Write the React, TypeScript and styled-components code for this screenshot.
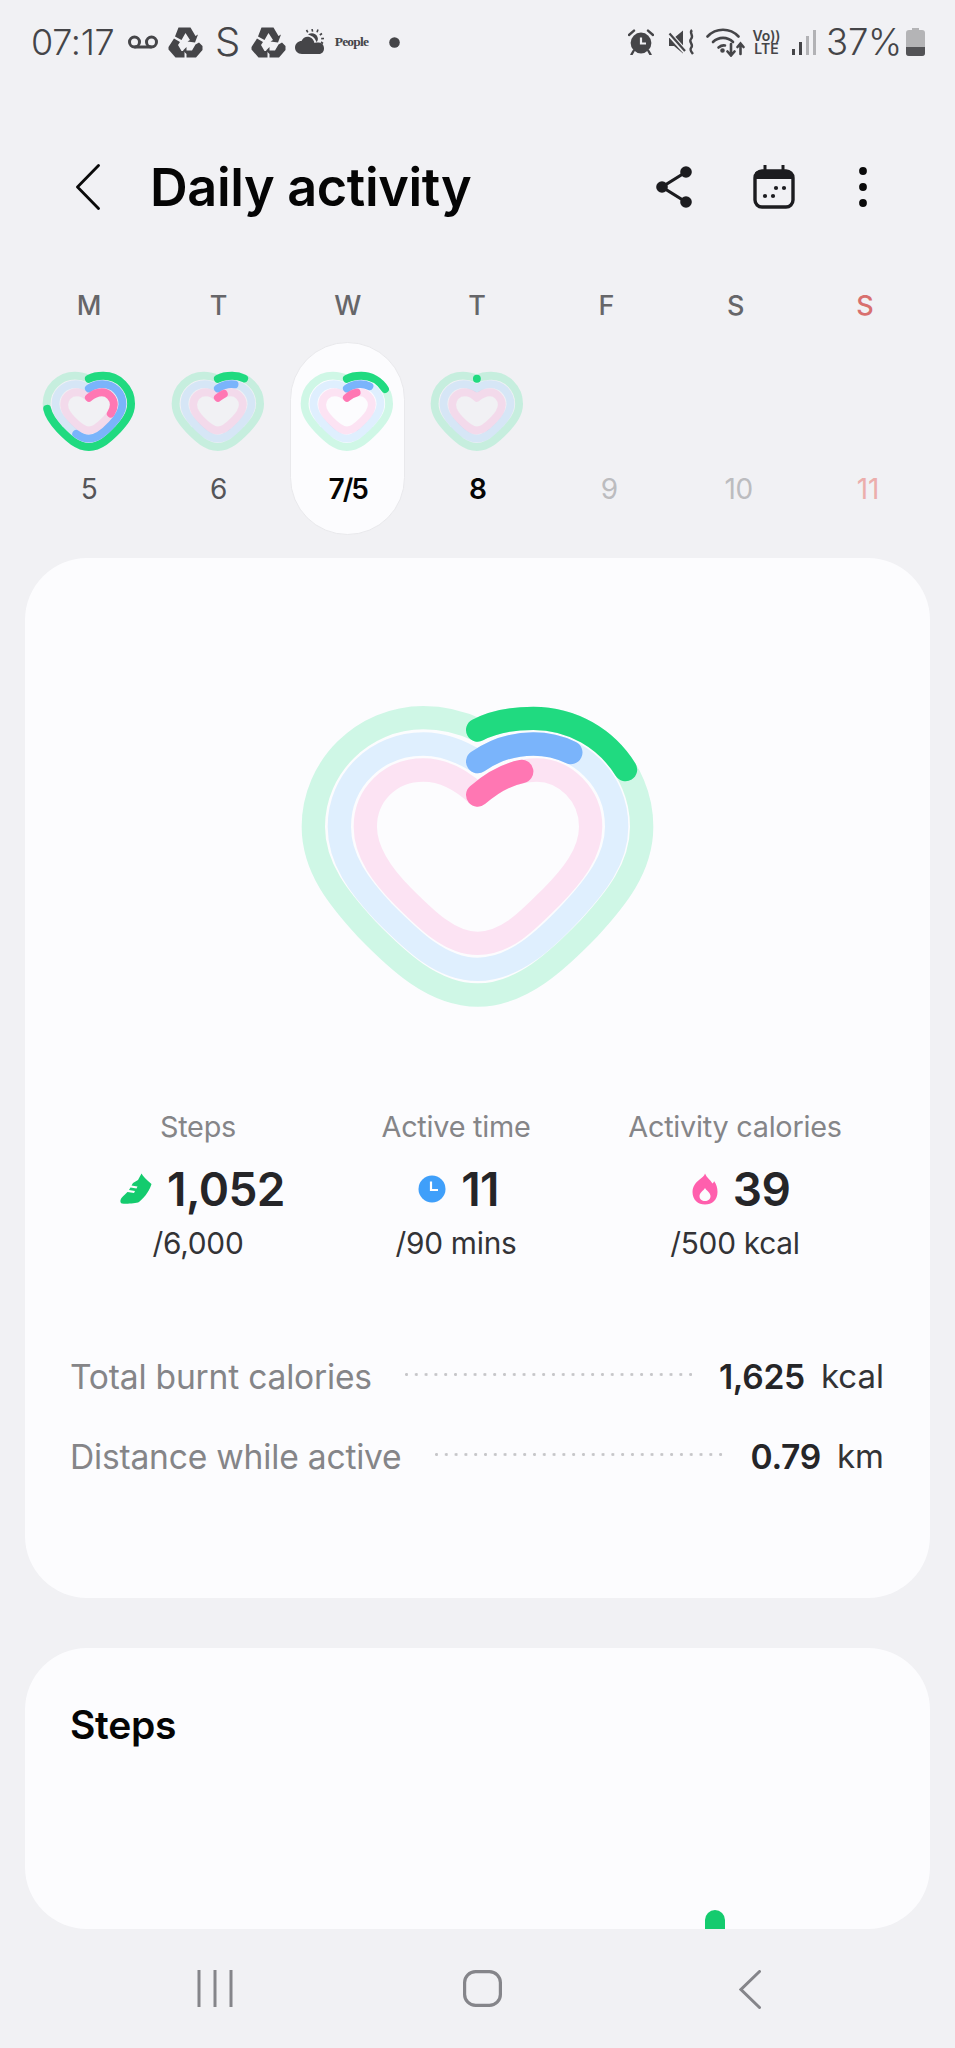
import React from "react";
import styled, { createGlobalStyle } from "styled-components";

const Global = createGlobalStyle`
  html, body { margin: 0; padding: 0; background: #f1f1f4; }
  body { font-family: Inter, "Noto Sans", "Liberation Sans", sans-serif; }
  #root { width: 955px; height: 2048px; overflow: hidden; }
`;

const Page = styled.div`
  width: 955px;
  height: 2048px;
  overflow: hidden;
  background: #f1f1f4;
  display: flex;
  flex-direction: column;
`;

const StatusBar = styled.div`
  height: 84px;
  padding: 0 30px 0 31px;
  display: flex;
  align-items: center;
  justify-content: space-between;
  color: #454548;
  box-sizing: border-box;
`;
const StatusGroup = styled.div`
  display: flex;
  align-items: center;
`;
const StatusText = styled.span<{ $size?: number }>`
  font-size: ${(p) => p.$size ?? 36}px;
  font-weight: 300;
  line-height: 40px;
  letter-spacing: -0.3px;
  white-space: nowrap;
`;
const Slot = styled.span<{ $ml: number; $w: number }>`
  display: flex;
  align-items: center;
  justify-content: center;
  margin-left: ${(p) => p.$ml}px;
  width: ${(p) => p.$w}px;
  flex: none;
`;
const PeopleMark = styled.span`
  font-family: "Liberation Serif", serif;
  font-weight: 700;
  font-size: 13.5px;
  letter-spacing: -0.8px;
  color: #454548;
  white-space: nowrap;
`;
const VoLte = styled.span`
  display: flex;
  flex-direction: column;
  align-items: center;
  font-family: Inter, sans-serif;
  font-weight: 600;
  color: #454548;
  font-size: 14px;
  line-height: 13px;
  white-space: nowrap;
`;

const Header = styled.header`
  margin-top: 75px;
  padding: 0 0 0 76px;
  display: flex;
  align-items: center;
  box-sizing: border-box;
  height: 56px;
`;
const Title = styled.h1`
  margin: 0 0 0 50px;
  font-size: 52.2px;
  font-weight: 600;
  letter-spacing: -0.35px;
  color: #050505;
  line-height: 56px;
  white-space: nowrap;
`;
const HeaderIcons = styled.div`
  margin-left: auto;
  display: flex;
  align-items: center;
`;
const HeaderSlot = styled.span<{ $ml: number }>`
  margin-left: ${(p) => p.$ml}px;
  display: flex;
`;

const Week = styled.section`
  margin: 74px 0 0 24.5px;
  width: 906px;
  display: grid;
  grid-template-columns: repeat(7, 129.3px);
  height: 246.5px;
`;
const Day = styled.div`
  position: relative;
  display: flex;
  flex-direction: column;
  align-items: center;
`;
const DayLetter = styled.div<{ $red?: boolean }>`
  font-size: 27px;
  line-height: 34px;
  font-weight: 500;
  color: ${(p) => (p.$red ? "#d8706e" : "#666669")};
`;
const DayPill = styled.div<{ $on?: boolean }>`
  margin-top: 19px;
  width: 115px;
  height: 193px;
  flex: none;
  border-radius: 58px;
  box-sizing: border-box;
  background: ${(p) => (p.$on ? "#fcfcfe" : "transparent")};
  border: 1px solid ${(p) => (p.$on ? "#e9e9ec" : "transparent")};
  display: flex;
  flex-direction: column;
  align-items: center;
`;
const HeartSlot = styled.div`
  width: 105px;
  height: 89px;
  margin-top: 22px;
  display: flex;
  justify-content: center;
`;
const DayNum = styled.div<{ $tone: string; $strong?: boolean; $shift?: boolean }>`
  margin-top: 17px;
  margin-left: ${(p) => (p.$shift ? 6 : 0)}px;
  font-size: 28px;
  line-height: 36px;
  white-space: nowrap;
  letter-spacing: ${(p) => (p.$strong ? -2 : -0.3)}px;
  font-weight: ${(p) => (p.$strong ? 600 : 400)};
  color: ${(p) => p.$tone};
`;

const Card = styled.section`
  margin: 22px 25px 0;
  width: 905px;
  height: 1040px;
  background: #fcfcfe;
  border-radius: 62px;
  box-sizing: border-box;
  display: flex;
  flex-direction: column;
  flex: none;
`;
const BigHeart = styled.div`
  width: 400px;
  height: 340px;
  margin: 122px 0 0 255px;
`;
const Stats = styled.div`
  margin-top: 90px;
  padding-left: 65px;
  display: grid;
  grid-template-columns: 216px 300px 258px;
`;
const Stat = styled.div`
  display: flex;
  flex-direction: column;
  align-items: center;
  white-space: nowrap;
`;
const StatLabel = styled.div`
  font-size: 28.8px;
  line-height: 34px;
  color: #858588;
  letter-spacing: -0.25px;
`;
const StatValue = styled.div<{ $ml: number }>`
  margin: 17px 0 0 ${(p) => p.$ml}px;
  display: flex;
  align-items: center;
  gap: 15px;
  font-size: 46px;
  line-height: 56px;
  font-weight: 600;
  color: #252528;
  letter-spacing: -0.6px;
`;
const StatGoal = styled.div`
  margin-top: 9px;
  font-size: 29.8px;
  line-height: 34px;
  color: #333336;
  letter-spacing: -0.25px;
`;
const Rows = styled.div`
  margin-top: 96px;
  padding: 0 46px 0 45px;
  display: flex;
  flex-direction: column;
  gap: 39px;
`;
const Row = styled.div`
  display: flex;
  align-items: center;
  height: 41px;
  white-space: nowrap;
`;
const RowLabel = styled.span`
  font-size: 33.6px;
  color: #858588;
  letter-spacing: -0.2px;
`;
const Dots = styled.span`
  flex: 1;
  height: 3px;
  margin: -4px 27px 0 33px;
  background-image: radial-gradient(circle at 1.5px 1.5px, #c6c6c9 1.3px, transparent 1.6px);
  background-size: 9.8px 3px;
  background-repeat: repeat-x;
`;
const RowValue = styled.span`
  font-size: 33.6px;
  font-weight: 600;
  color: #252528;
  letter-spacing: -0.3px;
`;
const RowUnit = styled.span`
  margin-left: 16px;
  font-size: 33px;
  color: #333336;
`;

const StepsCard = styled.section`
  margin: 50px 25px 0;
  width: 905px;
  height: 281px;
  background: #fcfcfe;
  border-radius: 62px;
  padding: 0 46px 0 45px;
  box-sizing: border-box;
  display: flex;
  flex-direction: column;
  flex: none;
`;
const StepsTitle = styled.h2`
  margin: 57px 0 0;
  font-size: 39px;
  line-height: 40px;
  font-weight: 600;
  color: #050505;
  letter-spacing: -0.3px;
`;
const StepBar = styled.div`
  margin-top: auto;
  margin-left: 635px;
  width: 20px;
  height: 19px;
  background: #14cb6e;
  border-radius: 10px 10px 0 0;
`;

const NavBar = styled.nav`
  flex: 1;
  display: flex;
  align-items: flex-start;
  padding: 41px 0 0 197px;
  color: #85858a;
`;
const NavSlot = styled.span<{ $ml: number }>`
  margin-left: ${(p) => p.$ml}px;
  display: flex;
`;

const GREEN = "M593,150 C640,125 700,115 760,115 C940,115 1085,260 1085,440 C1085,565 1005,660 927,745 C835,840 725,945 593,945 C460,945 350,840 258,745 C180,660 100,565 100,440 C100,260 250,113 430,113 C490,113 540,125 593,150 Z";
const BLUE = "M593,245 C640,212 700,192 760,192 C900,192 1010,300 1010,440 C1010,540 945,620 875,695 C800,775 705,868 593,868 C480,868 390,775 310,695 C240,620 178,540 178,440 C178,300 290,192 430,192 C490,192 540,212 593,245 Z";
const PINK = "M593,345 C645,300 700,270 770,270 C855,270 932,345 932,440 C932,520 875,590 815,650 C745,720 680,790 593,790 C510,790 440,720 370,650 C310,590 256,520 256,440 C256,345 330,270 430,270 C490,270 540,295 593,345 Z";

const Ring = ({ d, track, color, frac, scale, width }: { d: string; track: string; color: string; frac?: number; scale: number; width: number }) => (
  <g
    transform={`translate(594 530) scale(${scale}) translate(-594 -530)`}
    strokeWidth={width / scale}
  >
    <path d={d} stroke={track} />
    {frac !== undefined && <path d={d} stroke={color} pathLength={100} strokeDasharray={`${frac} 200`} />}
  </g>
);

const Heart = ({ g, b, p, size, small }: { g?: number; b?: number; p?: number; size: number; small?: boolean }) => (
  <svg width={size} height={size * 0.85} viewBox="0 0 1200 1020" fill="none" strokeLinecap="round" strokeLinejoin="round">
    <Ring d={GREEN} track="rgba(32,232,134,0.2)" color="#20da80" frac={g} scale={small ? 0.98 : 1} width={small ? 90 : 70} />
    <Ring d={BLUE} track="rgba(112,192,254,0.2)" color="#7ab4fb" frac={b} scale={small ? 0.92 : 1} width={small ? 90 : 70} />
    <Ring d={PINK} track="rgba(255,132,199,0.2)" color="#ff77b3" frac={p} scale={small ? 0.84 : 1} width={small ? 90 : 70} />
  </svg>
);

const HexRecycle = () => (
  <svg width="35" height="31" viewBox="0 0 35 31" fill="#454548">
    <path d="M10.5 0.5 H22.5 L27.5 9 L30 7.5 L27 15.5 L19.5 14.5 L22 13 L17.5 6 L13.5 13 L7 9.5 Z" />
    <path d="M6 11.5 L12 15 L10 18 L13.5 24 H16.5 V30.5 H7.5 L0.5 22.5 L0.5 20 Z" />
    <path d="M34.5 19 V23 L28 30.5 H18.5 V27 L15 23.5 L18.5 20 V23.5 H24 L27.5 17.5 L31 15.5 Z" />
  </svg>
);

type DayData = { l: string; n: string; tone: string; strong?: boolean; on?: boolean; red?: boolean; shift?: boolean; h?: (number | undefined)[] };
const days: DayData[] = [
  { l: "M", n: "5", tone: "#555558", h: [74, 57, 30] },
  { l: "T", n: "6", tone: "#555558", h: [11, 9, 5] },
  { l: "W", n: "7/5", tone: "#050505", strong: true, on: true, h: [17.5, 12.2, 7.8] },
  { l: "T", n: "8", tone: "#050505", strong: true, h: [0] },
  { l: "F", n: "9", tone: "#bcbcbf", shift: true },
  { l: "S", n: "10", tone: "#bcbcbf", shift: true },
  { l: "S", n: "11", tone: "#ecaeac", red: true, shift: true },
];

export default function App() {
  return (
    <Page>
      <Global />
      <StatusBar>
        <StatusGroup>
          <StatusText>07:17</StatusText>
          <Slot $ml={13} $w={32}>
            <svg width="32" height="14" viewBox="0 0 32 14" fill="none" stroke="#454548" strokeWidth="3">
              <circle cx="7.5" cy="7" r="5" />
              <circle cx="24.5" cy="7" r="5" />
              <path d="M7.5 12 H24.5" />
            </svg>
          </Slot>
          <Slot $ml={9} $w={35}><HexRecycle /></Slot>
          <Slot $ml={12} $w={24}><StatusText $size={40}>S</StatusText></Slot>
          <Slot $ml={12} $w={35}><HexRecycle /></Slot>
          <Slot $ml={9} $w={30}>
            <svg width="30" height="26" viewBox="0 0 30 26" fill="#454548">
              <path d="M7 25 C2.5 25 0 22 0 18.5 C0 14.5 3.5 12 6.5 12 C8 8.5 11.5 7 14.5 8 C17.5 9 19 11.5 19.5 14 C20.5 13.5 21.5 13.5 23 13.5 C26.5 13.5 29 15.5 29 19.5 C29 22.5 27 25 24 25 Z" />
              <path d="M13 5.5 C16 3.5 21 4 22.5 8 C23.5 10.5 22.5 12 21.5 13 C20.5 11 19.5 8 15.5 6.5 Z" />
              <path d="M17 0 L17.6 2.6 M23 0.5 L22 3.2 M27 4.5 L24.8 6 M29 9.5 L26.2 9.6 M28 14.5 L26 13 M11.5 1 L12.8 3.4" stroke="#454548" strokeWidth="1.6" />
            </svg>
          </Slot>
          <Slot $ml={11} $w={30}><PeopleMark>People</PeopleMark></Slot>
          <Slot $ml={23} $w={11}>
            <svg width="11" height="11" viewBox="0 0 11 11"><circle cx="5.5" cy="5.5" r="5.3" fill="#454548" /></svg>
          </Slot>
        </StatusGroup>
        <StatusGroup>
          <Slot $ml={0} $w={26}>
            <svg width="26" height="26" viewBox="0 0 26 26" fill="none">
              <circle cx="13" cy="14" r="10.4" fill="#454548" />
              <path d="M13 8.5 V14.5 H18" stroke="#f1f1f4" strokeWidth="2.2" />
              <path d="M1 6 L6 1.6 M25 6 L20 1.6 M5.5 22 L3.5 25.5 M20.5 22 L22.5 25.5" stroke="#454548" strokeWidth="2.4" strokeLinecap="round" />
            </svg>
          </Slot>
          <Slot $ml={14} $w={27}>
            <svg width="27" height="26" viewBox="0 0 27 26" fill="none">
              <path d="M1 9 H6 L15 1.5 V24.5 L6 17 H1 Z" fill="#454548" />
              <path d="M0.5 4 L18 23.5" stroke="#f1f1f4" strokeWidth="5" />
              <path d="M1.5 4.5 L17 22" stroke="#454548" strokeWidth="2.2" />
              <path d="M24 1 C20.5 4 26.5 6.5 23 10 C20 13 26.5 15.5 23 19 C21.5 21 23.5 23 25 25" stroke="#454548" strokeWidth="2.4" />
            </svg>
          </Slot>
          <Slot $ml={11} $w={39}>
            <svg width="39" height="30" viewBox="0 0 39 30" fill="none" stroke="#454548" strokeWidth="2.6" strokeLinecap="round">
              <path d="M1.5 9.5 C10 0.5 24 0.5 32.5 9.5" />
              <path d="M7 15 C12.5 9.5 21.5 9.5 27 15" />
              <path d="M12.5 20.5 C15 18.5 17 18 19 18.5" />
              <circle cx="16.5" cy="23.5" r="1" fill="#454548" />
              <path d="M25 17 V28 M21.5 24.5 L25 28.5 L28.5 24.5" />
              <path d="M34.5 27 V17 M31.5 20 L34.5 16.5 L37.5 20" />
            </svg>
          </Slot>
          <Slot $ml={8} $w={27}><VoLte><span>Vo))</span><span>LTE</span></VoLte></Slot>
          <Slot $ml={12} $w={24}>
            <svg width="24" height="27" viewBox="0 0 24 27" fill="none" strokeWidth="3">
              <path d="M1.5 26 V20" stroke="#454548" />
              <path d="M8.5 26 V13" stroke="#454548" />
              <path d="M15.5 26 V7" stroke="#b2b2b5" />
              <path d="M22.5 26 V1" stroke="#b2b2b5" />
            </svg>
          </Slot>
          <Slot $ml={13} $w={70}><StatusText $size={36.5}>37%</StatusText></Slot>
          <Slot $ml={7} $w={19}>
            <svg width="19" height="28" viewBox="0 0 19 28">
              <path d="M6 0 H13 V2 H16 Q19 2 19 5 V25 Q19 28 16 28 H3 Q0 28 0 25 V5 Q0 2 3 2 H6 Z" fill="#b4b4b6" />
              <path d="M0 19 H19 V25 Q19 28 16 28 H3 Q0 28 0 25 Z" fill="#535356" />
            </svg>
          </Slot>
        </StatusGroup>
      </StatusBar>

      <Header>
        <svg width="24" height="46" viewBox="0 0 24 46" fill="none" stroke="#0a0a0a" strokeWidth="2.8" strokeLinecap="round" strokeLinejoin="round">
          <path d="M22.5 1.5 L1.5 23 L22.5 44.5" />
        </svg>
        <Title>Daily activity</Title>
        <HeaderIcons>
          <HeaderSlot $ml={0}>
            <svg width="37" height="42" viewBox="0 0 37 42" fill="#1c1c1f">
              <path d="M30 6 L6 21 L30 36" fill="none" stroke="#1c1c1f" strokeWidth="3.2" />
              <circle cx="30" cy="6" r="5.8" />
              <circle cx="6" cy="21" r="5.8" />
              <circle cx="30" cy="36" r="5.8" />
            </svg>
          </HeaderSlot>
          <HeaderSlot $ml={60}>
            <svg width="42" height="44" viewBox="0 0 42 44" fill="none">
              <path d="M12 0.5 V7 M30 0.5 V7" stroke="#1c1c1f" strokeWidth="3" strokeLinecap="round" />
              <rect x="2" y="6" width="38" height="36" rx="7" stroke="#1c1c1f" strokeWidth="3.4" />
              <path d="M2 8 Q2 6 9 6 H33 Q40 6 40 13 V14 H2 Z" fill="#1c1c1f" />
              <g fill="#1c1c1f">
                <circle cx="23" cy="23" r="2.1" /><circle cx="31" cy="23" r="2.1" />
                <circle cx="12" cy="31" r="2.1" /><circle cx="20" cy="31" r="2.1" />
              </g>
            </svg>
          </HeaderSlot>
          <HeaderSlot $ml={64}>
            <svg width="8" height="40" viewBox="0 0 8 40" fill="#0a0a0a">
              <circle cx="4" cy="4" r="3.9" /><circle cx="4" cy="20" r="3.9" /><circle cx="4" cy="36" r="3.9" />
            </svg>
          </HeaderSlot>
          <HeaderSlot $ml={88} />
        </HeaderIcons>
      </Header>

      <Week>
        {days.map((d, i) => (
          <Day key={i}>
            <DayLetter $red={d.red}>{d.l}</DayLetter>
            <DayPill $on={d.on}>
              <HeartSlot>
                {d.h && <Heart small size={105} g={d.h[0]} b={d.h[1]} p={d.h[2]} />}
              </HeartSlot>
              <DayNum $tone={d.tone} $strong={d.strong} $shift={d.shift}>{d.n}</DayNum>
            </DayPill>
          </Day>
        ))}
      </Week>

      <Card>
        <BigHeart>
          <Heart size={400} g={17.5} b={12.2} p={7.8} />
        </BigHeart>
        <Stats>
          <Stat>
            <StatLabel>Steps</StatLabel>
            <StatValue $ml={9}>
              <svg width="32" height="31" viewBox="0 0 32 31" fill="#14cb6e">
                <path d="M21.5 0.5 C23 3 26.5 7 31.5 11 C30 16 26 23.5 19 29 C16 30.5 6 31 2 30.5 C0 30 0 27 1.5 25 C3.5 22.5 6 20.5 7.5 19 L14 20 L15 18 L9 17 L10.5 14.5 L16.5 15.5 L17.5 13.5 L11.5 12.5 L13 10 L18 7 Z" />
              </svg>
              1,052
            </StatValue>
            <StatGoal>/6,000</StatGoal>
          </Stat>
          <Stat>
            <StatLabel>Active time</StatLabel>
            <StatValue $ml={5}>
              <svg width="28" height="28" viewBox="0 0 28 28">
                <circle cx="14" cy="14" r="13.5" fill="#3f9ffa" />
                <path d="M13 6.5 V15 H20" fill="none" stroke="#fff" strokeWidth="2.2" />
              </svg>
              11
            </StatValue>
            <StatGoal>/90 mins</StatGoal>
          </Stat>
          <Stat>
            <StatLabel>Activity calories</StatLabel>
            <StatValue $ml={12}>
              <svg width="26" height="32" viewBox="0 0 26 32" fill="#ff5fad" fillRule="evenodd">
                <path d="M13 0.5 C14.5 4.5 18 6.5 20.5 10.5 C21.5 9.5 22 9 22 8 C24.5 11 25.5 15 25.5 19 C25.5 27 20 31.5 13 31.5 C6 31.5 0.5 27 0.5 19 C0.5 13 4 9.5 7 7 C10 4.5 12.5 3 13 0.5 Z M13 15 C11.5 17.5 7.5 20 7.5 23 C7.5 26.5 10 28 13 28 C16 28 18.5 26.5 18.5 23 C18.5 20 14.5 17.5 13 15 Z" />
              </svg>
              39
            </StatValue>
            <StatGoal>/500 kcal</StatGoal>
          </Stat>
        </Stats>
        <Rows>
          <Row>
            <RowLabel>Total burnt calories</RowLabel>
            <Dots />
            <RowValue>1,625</RowValue>
            <RowUnit>kcal</RowUnit>
          </Row>
          <Row>
            <RowLabel>Distance while active</RowLabel>
            <Dots />
            <RowValue>0.79</RowValue>
            <RowUnit>km</RowUnit>
          </Row>
        </Rows>
      </Card>

      <StepsCard>
        <StepsTitle>Steps</StepsTitle>
        <StepBar />
      </StepsCard>

      <NavBar>
        <NavSlot $ml={0}>
          <svg width="36" height="37" viewBox="0 0 36 37" fill="none" stroke="#85858a" strokeWidth="3">
            <path d="M2 0 V37 M18 0 V37 M34 0 V37" />
          </svg>
        </NavSlot>
        <NavSlot $ml={230}>
          <svg width="39" height="37" viewBox="0 0 39 37" fill="none" stroke="#85858a" strokeWidth="3.2">
            <rect x="1.6" y="1.6" width="35.8" height="33.8" rx="11" />
          </svg>
        </NavSlot>
        <NavSlot $ml={237}>
          <svg width="22" height="39" viewBox="0 0 22 39" fill="none" stroke="#85858a" strokeWidth="3" strokeLinecap="round">
            <path d="M20.5 1.5 L2 19.5 L20.5 37.5" />
          </svg>
        </NavSlot>
      </NavBar>
    </Page>
  );
}
